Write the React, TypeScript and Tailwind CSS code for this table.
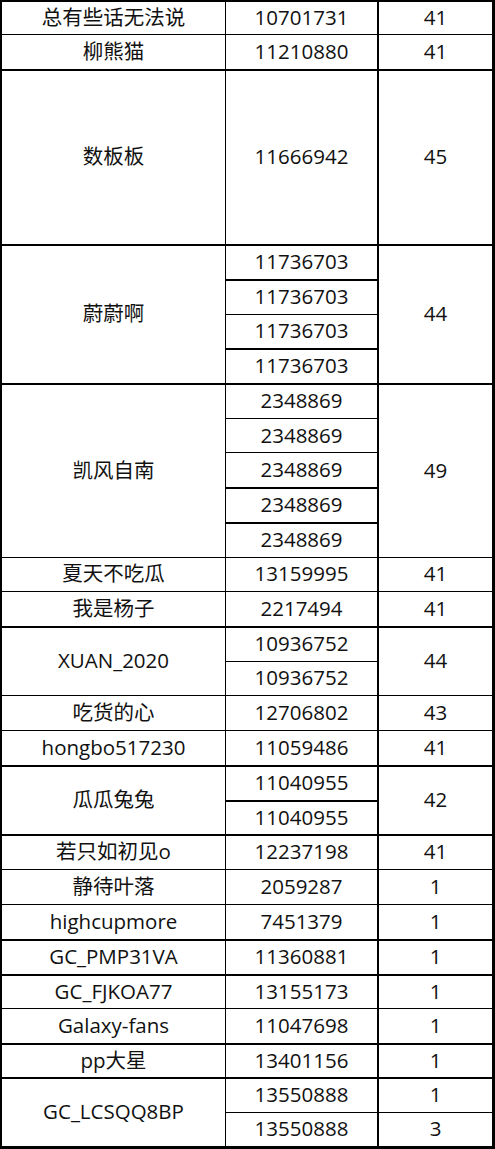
import React from "react";

type Group = {
  name: string;
  h: string;
  bt: string;
  ids: string[];
  idLines?: string[];
  vals: string[];
  valLines?: string[];
};

const groups: Group[] = [
  { name: "总有些话无法说", h: "h-[32px]", bt: "", ids: ["10701731"], vals: ["41"] },
  { name: "柳熊猫", h: "h-[35px]", bt: "border-t", ids: ["11210880"], vals: ["41"] },
  { name: "数板板", h: "h-[175px]", bt: "border-t-2", ids: ["11666942"], vals: ["45"] },
  {
    name: "蔚蔚啊",
    h: "h-[139px]",
    bt: "border-t-2",
    ids: ["11736703", "11736703", "11736703", "11736703"],
    idLines: ["", "border-t-2", "border-t", "border-t-2"],
    vals: ["44"],
  },
  {
    name: "凯风自南",
    h: "h-[174px]",
    bt: "border-t-2",
    ids: ["2348869", "2348869", "2348869", "2348869", "2348869"],
    idLines: ["", "border-t", "border-t", "border-t-2", "border-t-2"],
    vals: ["49"],
  },
  { name: "夏天不吃瓜", h: "h-[34px]", bt: "border-t", ids: ["13159995"], vals: ["41"] },
  { name: "我是杨子", h: "h-[35px]", bt: "border-t", ids: ["2217494"], vals: ["41"] },
  {
    name: "XUAN_2020",
    h: "h-[69px]",
    bt: "border-t-2",
    ids: ["10936752", "10936752"],
    idLines: ["", "border-t"],
    vals: ["44"],
  },
  { name: "吃货的心", h: "h-[35px]", bt: "border-t", ids: ["12706802"], vals: ["43"] },
  { name: "hongbo517230", h: "h-[35px]", bt: "border-t", ids: ["11059486"], vals: ["41"] },
  {
    name: "瓜瓜兔兔",
    h: "h-[69px]",
    bt: "border-t-2",
    ids: ["11040955", "11040955"],
    idLines: ["", "border-t-2"],
    vals: ["42"],
  },
  { name: "若只如初见o", h: "h-[35px]", bt: "border-t-2", ids: ["12237198"], vals: ["41"] },
  { name: "静待叶落", h: "h-[35px]", bt: "border-t", ids: ["2059287"], vals: ["1"] },
  { name: "highcupmore", h: "h-[35px]", bt: "border-t", ids: ["7451379"], vals: ["1"] },
  { name: "GC_PMP31VA", h: "h-[35px]", bt: "border-t-2", ids: ["11360881"], vals: ["1"] },
  { name: "GC_FJKOA77", h: "h-[34px]", bt: "border-t-2", ids: ["13155173"], vals: ["1"] },
  { name: "Galaxy-fans", h: "h-[35px]", bt: "border-t", ids: ["11047698"], vals: ["1"] },
  { name: "pp大星", h: "h-[34px]", bt: "border-t-2", ids: ["13401156"], vals: ["1"] },
  {
    name: "GC_LCSQQ8BP",
    h: "h-[69px]",
    bt: "border-t-2",
    ids: ["13550888", "13550888"],
    idLines: ["", "border-t"],
    vals: ["1", "3"],
    valLines: ["", "border-t"],
  },
];

function Stack({ items, lines }: { items: string[]; lines?: string[] }) {
  return (
    <div className="flex h-full flex-col">
      {items.map((t, i) => (
        <div
          key={i}
          className={`flex flex-1 items-center justify-center border-black pb-[2px] ${lines ? lines[i] : ""}`}
        >
          {t}
        </div>
      ))}
    </div>
  );
}

export default function App() {
  return (
    <div
      className="w-[495px] bg-white text-[20.5px] leading-none text-[#111]"
      style={{ fontFamily: '"Open Sans", "Noto Sans CJK SC", sans-serif' }}
    >
      <div className="border-b-[3px] border-l-2 border-r-[3px] border-t-2 border-black">
        {groups.map((g, i) => (
          <div key={i} className={`flex border-black ${g.h} ${g.bt}`}>
            <div className="flex w-[224px] shrink-0 items-center justify-center border-r border-black pb-[2px]">
              {g.name}
            </div>
            <div className="w-[153px] shrink-0 border-r-2 border-black">
              <Stack items={g.ids} lines={g.idLines} />
            </div>
            <div className="flex-1">
              <Stack items={g.vals} lines={g.valLines} />
            </div>
          </div>
        ))}
      </div>
    </div>
  );
}
